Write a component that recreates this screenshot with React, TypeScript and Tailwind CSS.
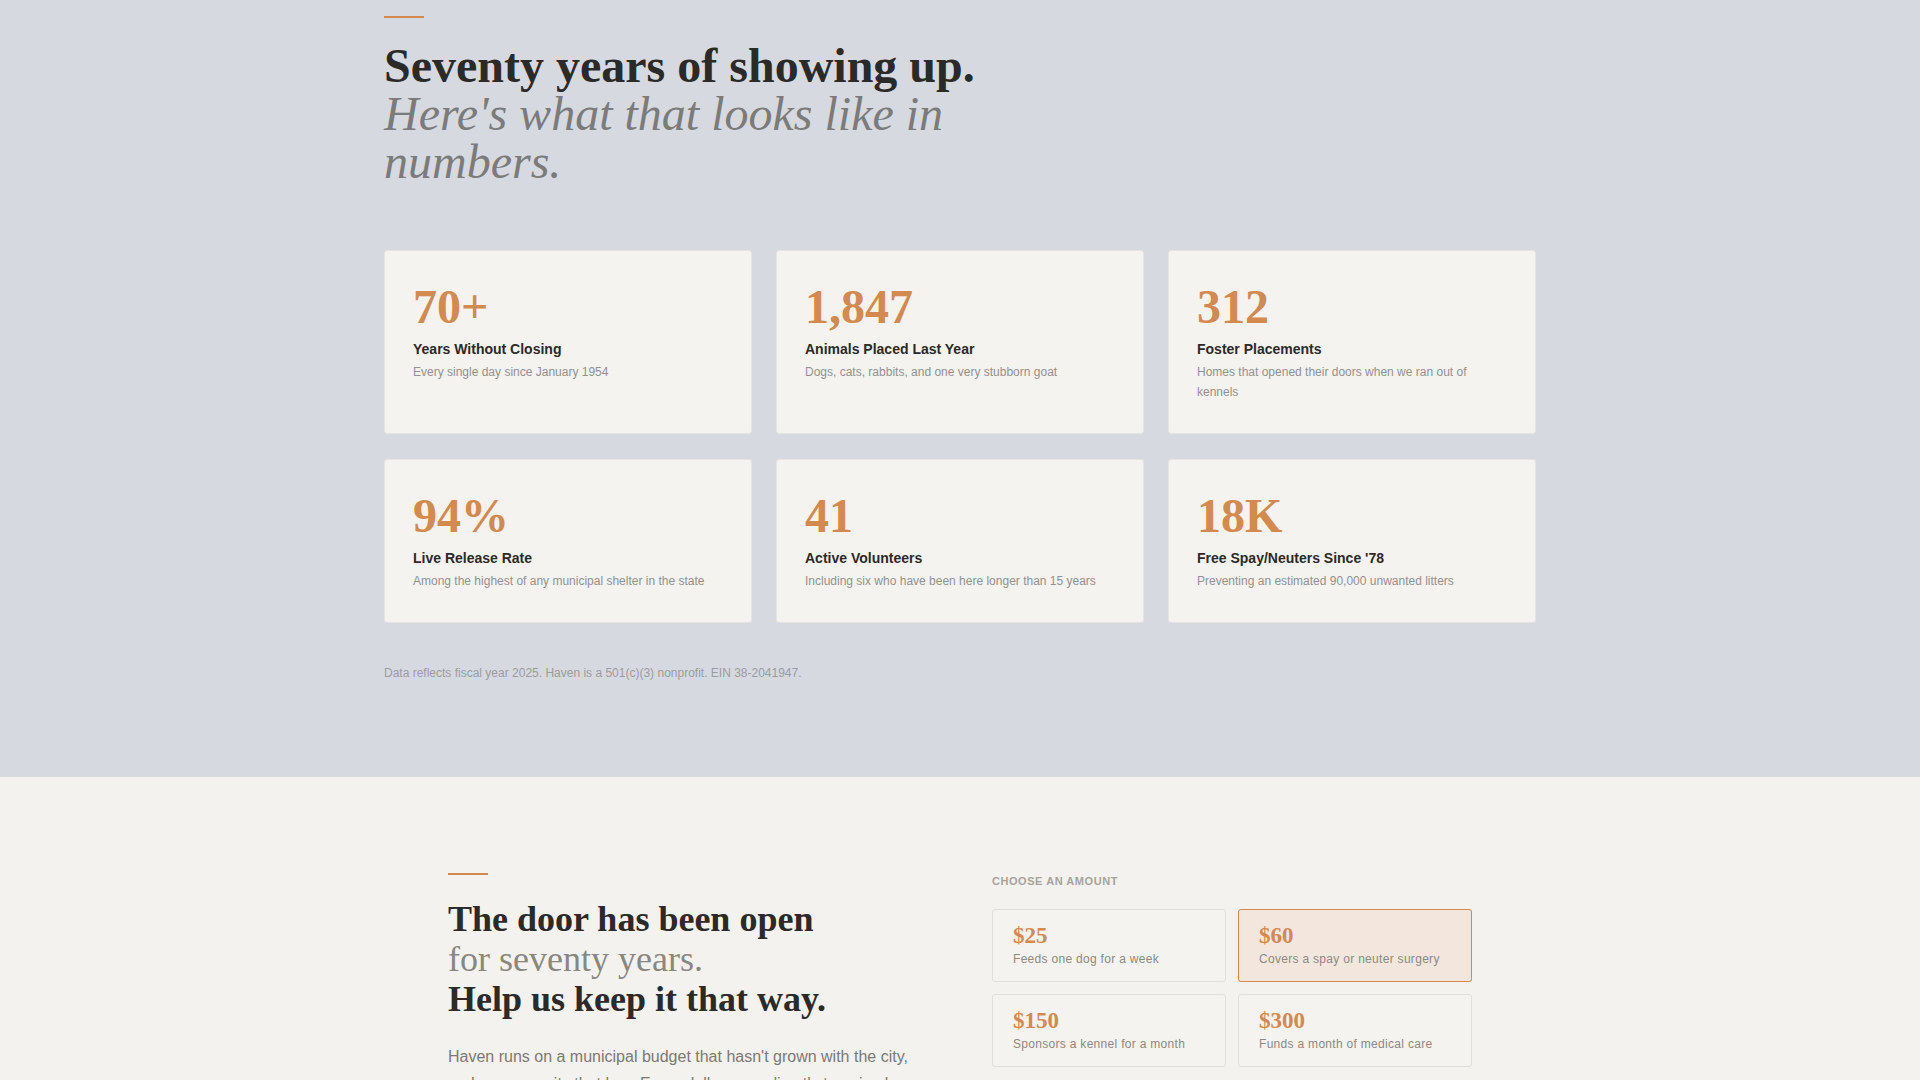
import React from 'react';

const stats = [
  { value: '70+', label: 'Years Without Closing', note: 'Every single day since January 1954' },
  { value: '1,847', label: 'Animals Placed Last Year', note: 'Dogs, cats, rabbits, and one very stubborn goat' },
  { value: '312', label: 'Foster Placements', note: 'Homes that opened their doors when we ran out of kennels' },
  { value: '94%', label: 'Live Release Rate', note: 'Among the highest of any municipal shelter in the state' },
  { value: '41', label: 'Active Volunteers', note: 'Including six who have been here longer than 15 years' },
  { value: '18K', label: "Free Spay/Neuters Since '78", note: 'Preventing an estimated 90,000 unwanted litters' },
];

const amounts = [
  { value: '$25', note: 'Feeds one dog for a week', selected: false },
  { value: '$60', note: 'Covers a spay or neuter surgery', selected: true },
  { value: '$150', note: 'Sponsors a kennel for a month', selected: false },
  { value: '$300', note: 'Funds a month of medical care', selected: false },
];

const App: React.FC = () => {
  return (
    <div className="min-h-screen bg-[#f4f2ee] font-['Liberation_Sans',Arial,sans-serif]">
      {/* numbers */}
      <section className="bg-[#d6d9e0] pt-4 pb-[94px]">
        <div className="max-w-6xl mx-auto">
          <div className="w-10 h-0.5 bg-[#d4894f] mb-6" />
          <h2 className="max-w-2xl font-['Liberation_Serif',serif] text-5xl leading-none font-bold text-[#2b2a28]">
            Seventy years of showing up.
            <span className="block italic font-normal text-[#7b7b7b]">Here's what that looks like in numbers.</span>
          </h2>

          <div className="grid grid-cols-3 gap-x-6 gap-y-[25px] mt-16">
            {stats.map((s) => (
              <div key={s.value} className="bg-[#f4f3f0] border border-[#e6e5e2] rounded-[3px] px-7 pt-8 pb-[31px]">
                <div className="font-['Liberation_Serif',serif] text-5xl leading-none font-bold text-[#d4894f] mb-2">{s.value}</div>
                <h3 className="text-sm leading-5 font-bold text-[#2b2a28] mb-[3px]">{s.label}</h3>
                <p className="text-xs leading-5 text-[#939190]">{s.note}</p>
              </div>
            ))}
          </div>

          <p className="mt-10 text-xs leading-5 text-[#9b9ca1]">
            Data reflects fiscal year 2025. Haven is a 501(c)(3) nonprofit. EIN 38-2041947.
          </p>
        </div>
      </section>

      {/* donate */}
      <section className="bg-[#f4f2ee] pt-24 pb-24">
        <div className="max-w-5xl mx-auto grid grid-cols-2 gap-16">
          <div>
            <div className="w-10 h-0.5 bg-[#d4894f] mb-6" />
            <h2 className="font-['Liberation_Serif',serif] text-4xl leading-10 font-bold text-[#2b2a28]">
              The door has been open
              <span className="block font-normal text-[#8a8680]">for seventy years.</span>
              <span className="block">Help us keep it that way.</span>
            </h2>
            <p className="mt-6 text-base leading-[1.7] text-[#7d7974]">
              Haven runs on a municipal budget that hasn't grown with the city, and a community that has. Every dollar goes directly to animal care, from the first night's bed to the last vet check before going home.
            </p>
          </div>

          <div>
            <p className="text-[11px] leading-4 font-bold uppercase tracking-wider text-[#a7a29d] mb-5">Choose an amount</p>
            <div className="grid grid-cols-2 gap-3">
              {amounts.map((a) => (
                <button
                  key={a.value}
                  className={
                    a.selected
                      ? 'text-left rounded-[3px] border border-[#d4894f] bg-[#f3e6dc] px-5 py-3.5'
                      : 'text-left rounded-[3px] border border-[#e2dfdb] bg-[#f5f3f0] px-5 py-3.5'
                  }
                >
                  <div className="font-['Liberation_Serif',serif] text-[23px] leading-none font-bold text-[#d4894f] mb-1">{a.value}</div>
                  <div className="text-xs leading-4 tracking-wide text-[#8d8984]">{a.note}</div>
                </button>
              ))}
            </div>
          </div>
        </div>
      </section>
    </div>
  );
};

export default App;
